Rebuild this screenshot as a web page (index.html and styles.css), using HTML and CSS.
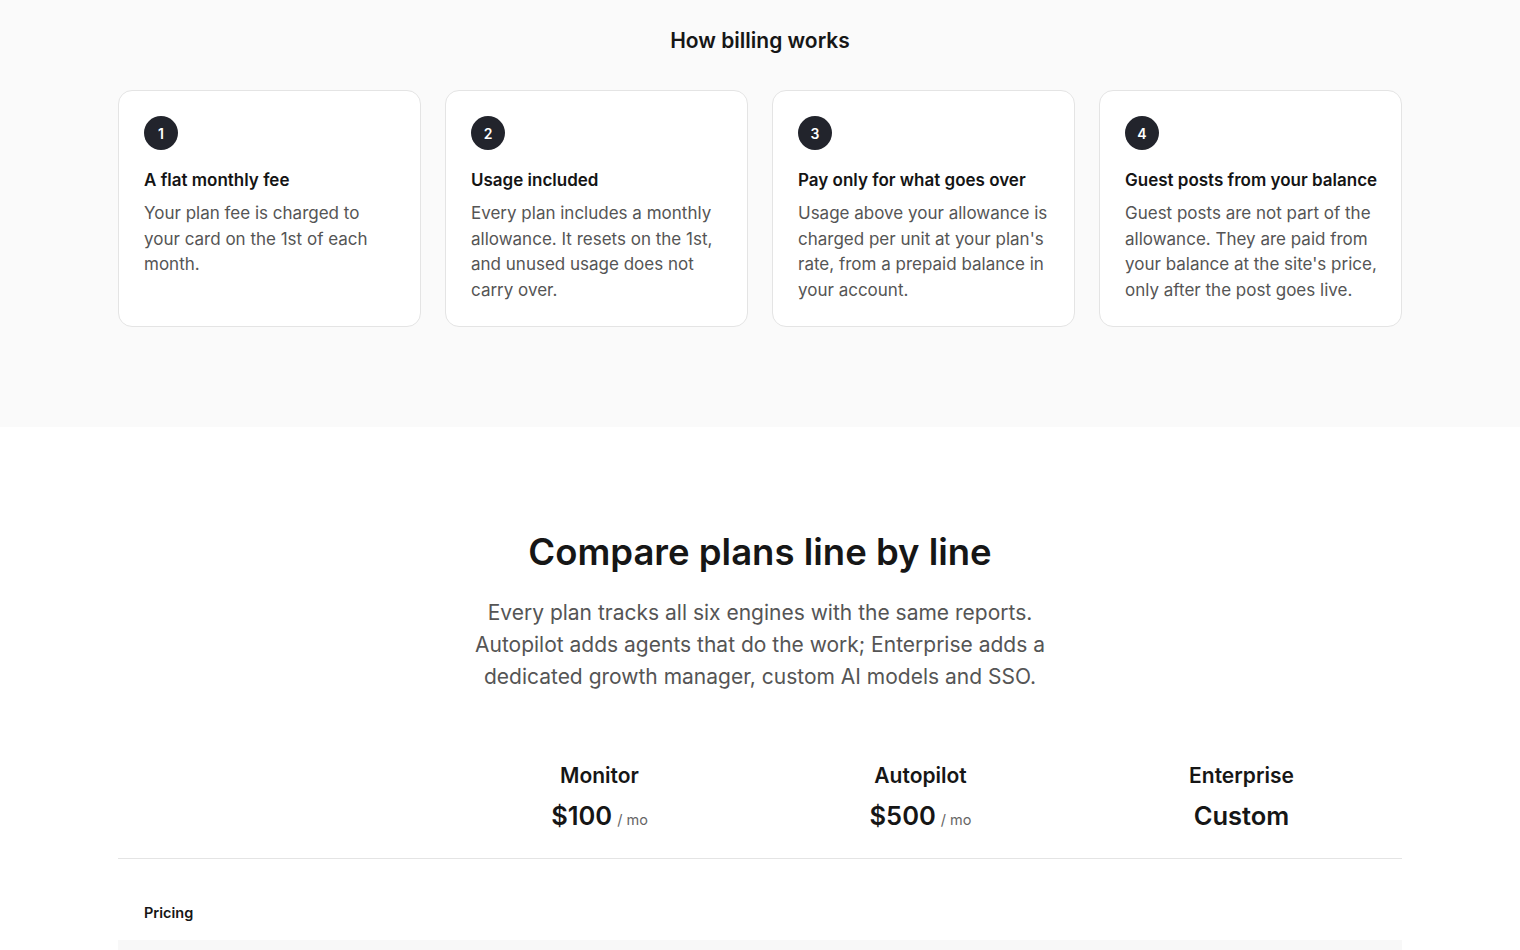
FILE: index.html
```html
<!DOCTYPE html>
<html lang="en">
<head>
<meta charset="utf-8">
<title>Billing</title>
<link rel="stylesheet" href="styles.css">
</head>
<body>
<section class="billing">
  <div class="container">
    <h2 class="billing-title">How billing works</h2>
    <div class="steps">
      <div class="step">
        <div class="step-num">1</div>
        <h3 class="step-title">A flat monthly fee</h3>
        <p class="step-text">Your plan fee is charged to your card on the 1st of each month.</p>
      </div>
      <div class="step">
        <div class="step-num">2</div>
        <h3 class="step-title">Usage included</h3>
        <p class="step-text">Every plan includes a monthly allowance. It resets on the 1st, and unused usage does not carry over.</p>
      </div>
      <div class="step">
        <div class="step-num">3</div>
        <h3 class="step-title">Pay only for what goes over</h3>
        <p class="step-text">Usage above your allowance is charged per unit at your plan's rate, from a prepaid balance in your account.</p>
      </div>
      <div class="step">
        <div class="step-num">4</div>
        <h3 class="step-title">Guest posts from your balance</h3>
        <p class="step-text">Guest posts are not part of the allowance. They are paid from your balance at the site's price, only after the post goes live.</p>
      </div>
    </div>
  </div>
</section>
<section class="compare">
  <div class="container">
    <h2 class="compare-title">Compare plans line by line</h2>
    <p class="compare-lead">Every plan tracks all six engines with the same reports. Autopilot adds agents that do the work; Enterprise adds a dedicated growth manager, custom AI models and SSO.</p>
    <div class="table">
      <div class="table-head">
        <div class="head-cell"></div>
        <div class="head-cell">
          <div class="plan-name">Monitor</div>
          <div class="plan-price">$100<span class="per">/ mo</span></div>
        </div>
        <div class="head-cell">
          <div class="plan-name">Autopilot</div>
          <div class="plan-price">$500<span class="per">/ mo</span></div>
        </div>
        <div class="head-cell">
          <div class="plan-name">Enterprise</div>
          <div class="plan-price">Custom</div>
        </div>
      </div>
      <div class="group-row">Pricing</div>
      <div class="shaded-row"></div>
    </div>
  </div>
</section>
</body>
</html>
```
FILE: styles.css
```css
* { box-sizing: border-box; }
html, body { margin: 0; padding: 0; }
body {
  font-family: Inter, "Noto Sans", "Liberation Sans", sans-serif;
  color: #111;
  background: #fff;
}
h2, h3, p { margin: 0; }
.container {
  width: 1284px;
  margin: 0 auto;
}
.billing {
  background: #fafafa;
  padding: 27px 0 100px;
}
.billing-title {
  text-align: center;
  font-size: 21px;
  line-height: 28px;
  font-weight: 600;
  color: #161616;
}
.steps {
  margin-top: 35px;
  display: grid;
  grid-template-columns: repeat(4, minmax(0, 1fr));
  gap: 24px;
}
.step {
  background: #fff;
  border: 1px solid #e4e4e4;
  border-radius: 14px;
  padding: 25px 22px 23px 25px;
}
.step-num {
  width: 34px;
  height: 34px;
  border-radius: 50%;
  background: #22242c;
  color: #fff;
  font-size: 14px;
  font-weight: 600;
  display: flex;
  align-items: center;
  justify-content: center;
}
.step-title {
  margin-top: 18px;
  font-size: 17px;
  line-height: 24px;
  font-weight: 600;
  color: #141414;
  white-space: nowrap;
}
.step-text {
  margin-top: 9px;
  font-size: 17px;
  line-height: 25.5px;
  color: #555;
}
.compare {
  padding: 100px 0 0;
}
.compare-title {
  text-align: center;
  font-size: 36.5px;
  line-height: 50px;
  font-weight: 600;
  color: #161616;
}
.compare-lead {
  margin: 20px auto 0;
  max-width: 600px;
  text-align: center;
  font-size: 21px;
  line-height: 32px;
  color: #555;
}
.table {
  margin-top: 69px;
}
.table-head {
  display: grid;
  grid-template-columns: repeat(4, minmax(0, 1fr));
  border-bottom: 1px solid #e4e4e4;
  padding-bottom: 21px;
}
.head-cell {
  text-align: center;
}
.plan-name {
  font-size: 21px;
  line-height: 28px;
  font-weight: 600;
  color: #161616;
}
.plan-price {
  margin-top: 9px;
  font-size: 25.5px;
  line-height: 34px;
  font-weight: 600;
  color: #161616;
}
.per {
  margin-left: 5px;
  font-size: 14.5px;
  font-weight: 400;
  color: #666;
}
.group-row {
  padding: 44px 26px 17px;
  font-size: 14.5px;
  line-height: 20px;
  font-weight: 600;
  color: #161616;
}
.shaded-row {
  height: 60px;
  background: #f8f8f8;
}
```
